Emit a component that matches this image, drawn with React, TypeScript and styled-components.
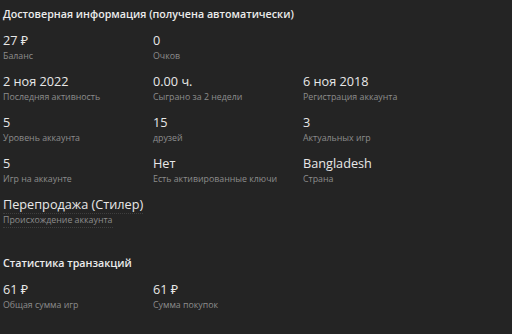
import React from 'react'
import styled, { createGlobalStyle } from 'styled-components'

const GlobalStyle = createGlobalStyle`
  html, body {
    margin: 0;
    padding: 0;
    background: #242424;
  }
  body {
    font-family: 'Open Sans', 'Noto Sans', sans-serif;
    color: #e6e6e6;
  }
`

const Page = styled.div`
  width: 512px;
  height: 334px;
  box-sizing: border-box;
  padding: 6px 3px;
  background: #242424;
  overflow: hidden;
`

const Section = styled.section`
  & + & {
    margin-top: 27px;
  }
`

const SectionTitle = styled.h3`
  margin: 0 0 9px;
  font-size: 10.7px;
  line-height: 16px;
  font-weight: 600;
  color: #ececec;
`

const Grid = styled.div`
  display: grid;
  grid-template-columns: 150px 150px 150px;
  row-gap: 8px;
`

const Item = styled.div<{ $marked?: boolean }>`
  display: flex;
  flex-direction: column;
  align-items: flex-start;

  & > * {
    border-bottom: ${({ $marked }) => ($marked ? '1px dotted #3e3e3e' : '1px solid transparent')};
  }
`

const Value = styled.div`
  font-size: 12.7px;
  line-height: 18px;
  color: #e8e8e8;
  white-space: nowrap;
`

const Label = styled.div`
  font-size: 8.8px;
  line-height: 13px;
  color: #8c8c8c;
  white-space: nowrap;
`

type Stat = { value: string; label: string; marked?: boolean }

const verified: (Stat | null)[] = [
  { value: '27 ₽', label: 'Баланс' },
  { value: '0', label: 'Очков' },
  null,
  { value: '2 ноя 2022', label: 'Последняя активность' },
  { value: '0.00 ч.', label: 'Сыграно за 2 недели' },
  { value: '6 ноя 2018', label: 'Регистрация аккаунта' },
  { value: '5', label: 'Уровень аккаунта' },
  { value: '15', label: 'друзей' },
  { value: '3', label: 'Актуальных игр' },
  { value: '5', label: 'Игр на аккаунте' },
  { value: 'Нет', label: 'Есть активированные ключи' },
  { value: 'Bangladesh', label: 'Страна' },
  { value: 'Перепродажа (Стилер)', label: 'Происхождение аккаунта', marked: true },
]

const transactions: Stat[] = [
  { value: '61 ₽', label: 'Общая сумма игр' },
  { value: '61 ₽', label: 'Сумма покупок' },
]

const StatGrid = ({ items }: { items: (Stat | null)[] }) => (
  <Grid>
    {items.map((item, i) =>
      item ? (
        <Item key={i} $marked={item.marked}>
          <Value>{item.value}</Value>
          <Label>{item.label}</Label>
        </Item>
      ) : (
        <div key={i} />
      ),
    )}
  </Grid>
)

const App = () => (
  <>
    <GlobalStyle />
    <Page>
      <Section>
        <SectionTitle>Достоверная информация (получена автоматически)</SectionTitle>
        <StatGrid items={verified} />
      </Section>
      <Section>
        <SectionTitle>Статистика транзакций</SectionTitle>
        <StatGrid items={transactions} />
      </Section>
    </Page>
  </>
)

export default App
